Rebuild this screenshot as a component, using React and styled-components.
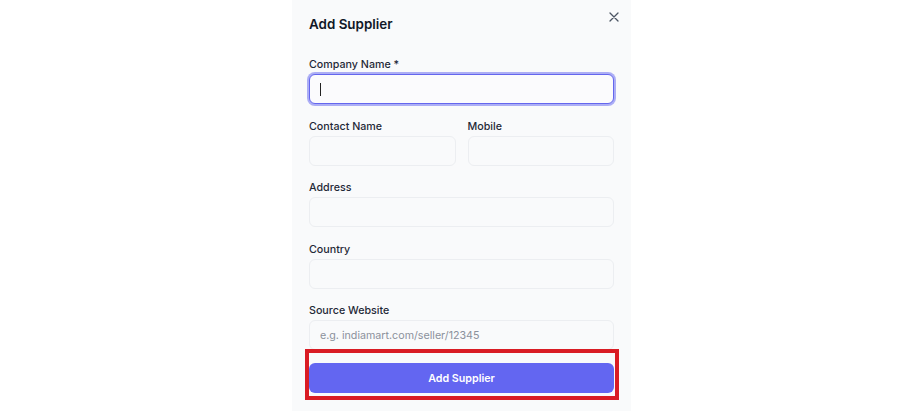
import styled, { createGlobalStyle } from "styled-components";

const GlobalStyle = createGlobalStyle`
  html, body {
    margin: 0;
    padding: 0;
    background: #ffffff;
    font-family: 'Inter', 'Noto Sans', sans-serif;
  }
`;

export default function App() {
    return (
        <Page>
            <GlobalStyle />
            <Panel>
                <Header>
                    <Title>Add Supplier</Title>
                    <Close aria-label="close">
                        <svg width="10" height="10" viewBox="0 0 10 10">
                            <path d="M1 1L9 9M9 1L1 9" stroke="#4b5563" strokeWidth="1.3" strokeLinecap="round" />
                        </svg>
                    </Close>
                </Header>

                <Form>
                    <Field>
                        <Label>Company Name *</Label>
                        <FocusedInput>
                            <Caret />
                        </FocusedInput>
                    </Field>

                    <Row>
                        <Field>
                            <Label>Contact Name</Label>
                            <Input />
                        </Field>
                        <Field>
                            <Label>Mobile</Label>
                            <Input />
                        </Field>
                    </Row>

                    <Field>
                        <Label>Address</Label>
                        <Input />
                    </Field>

                    <Field>
                        <Label>Country</Label>
                        <Input />
                    </Field>

                    <Field>
                        <Label>Source Website</Label>
                        <Input placeholder="e.g. indiamart.com/seller/12345" />
                    </Field>
                </Form>

                <Highlight>
                    <SubmitButton>Add Supplier</SubmitButton>
                </Highlight>
            </Panel>
        </Page>
    );
}

const Page = styled.div`
width: 920px;
height: 411px;
overflow: hidden;
display: flex;
justify-content: center;
padding-left: 3px;
box-sizing: border-box;
background: #ffffff;
`

const Panel = styled.div`
width: 339px;
height: 411px;
box-sizing: border-box;
background: #f9fafb;
padding: 14px 17px 0 17px;
display: flex;
flex-direction: column;
`

const Header = styled.div`
display: flex;
justify-content: space-between;
align-items: flex-start;
height: 18px;
margin-bottom: 25px;
`

const Title = styled.div`
font-size: 13.4px;
font-weight: 600;
color: #111827;
line-height: 20px;
`

const Close = styled.div`
display: flex;
margin-top: -2px;
margin-right: -5px;
`

const Form = styled.div`
display: flex;
flex-direction: column;
gap: 14.5px;
`

const Field = styled.div`
display: flex;
flex-direction: column;
gap: 1px;
`

const Row = styled.div`
display: flex;
gap: 12px;

& > * {
  flex: 1;
}
`

const Label = styled.label`
font-size: 10.7px;
font-weight: 500;
line-height: 16px;
color: #1f2937;
`

const Input = styled.input`
height: 30px;
box-sizing: border-box;
width: 100%;
border: 1px solid #eceef1;
border-radius: 6px;
background: #f9fafb;
padding: 0 10px;
font-family: 'Inter', 'Noto Sans', sans-serif;
font-size: 10.7px;
color: #111827;
outline: none;

&::placeholder {
  color: #8b919b;
}
`

const FocusedInput = styled.div`
height: 30px;
box-sizing: border-box;
border: 1px solid #6466ee;
box-shadow: 0 0 0 2px rgba(110, 112, 240, 0.55);
border-radius: 6px;
background: #fbfbfd;
display: flex;
align-items: center;
padding: 0 10px;
`

const Caret = styled.span`
width: 1px;
height: 13px;
background: #222;
`

const Highlight = styled.div`
position: relative;
margin-top: 13px;

&::before {
  content: '';
  position: absolute;
  left: -4px;
  right: -5px;
  top: -14px;
  bottom: -7px;
  border: 4px solid #d91c24;
  pointer-events: none;
}
`

const SubmitButton = styled.button`
display: block;
width: 100%;
height: 30px;
border: none;
border-radius: 6px;
background: #6366f1;
color: #ffffff;
font-family: 'Inter', 'Noto Sans', sans-serif;
font-size: 10.7px;
font-weight: 600;
`
